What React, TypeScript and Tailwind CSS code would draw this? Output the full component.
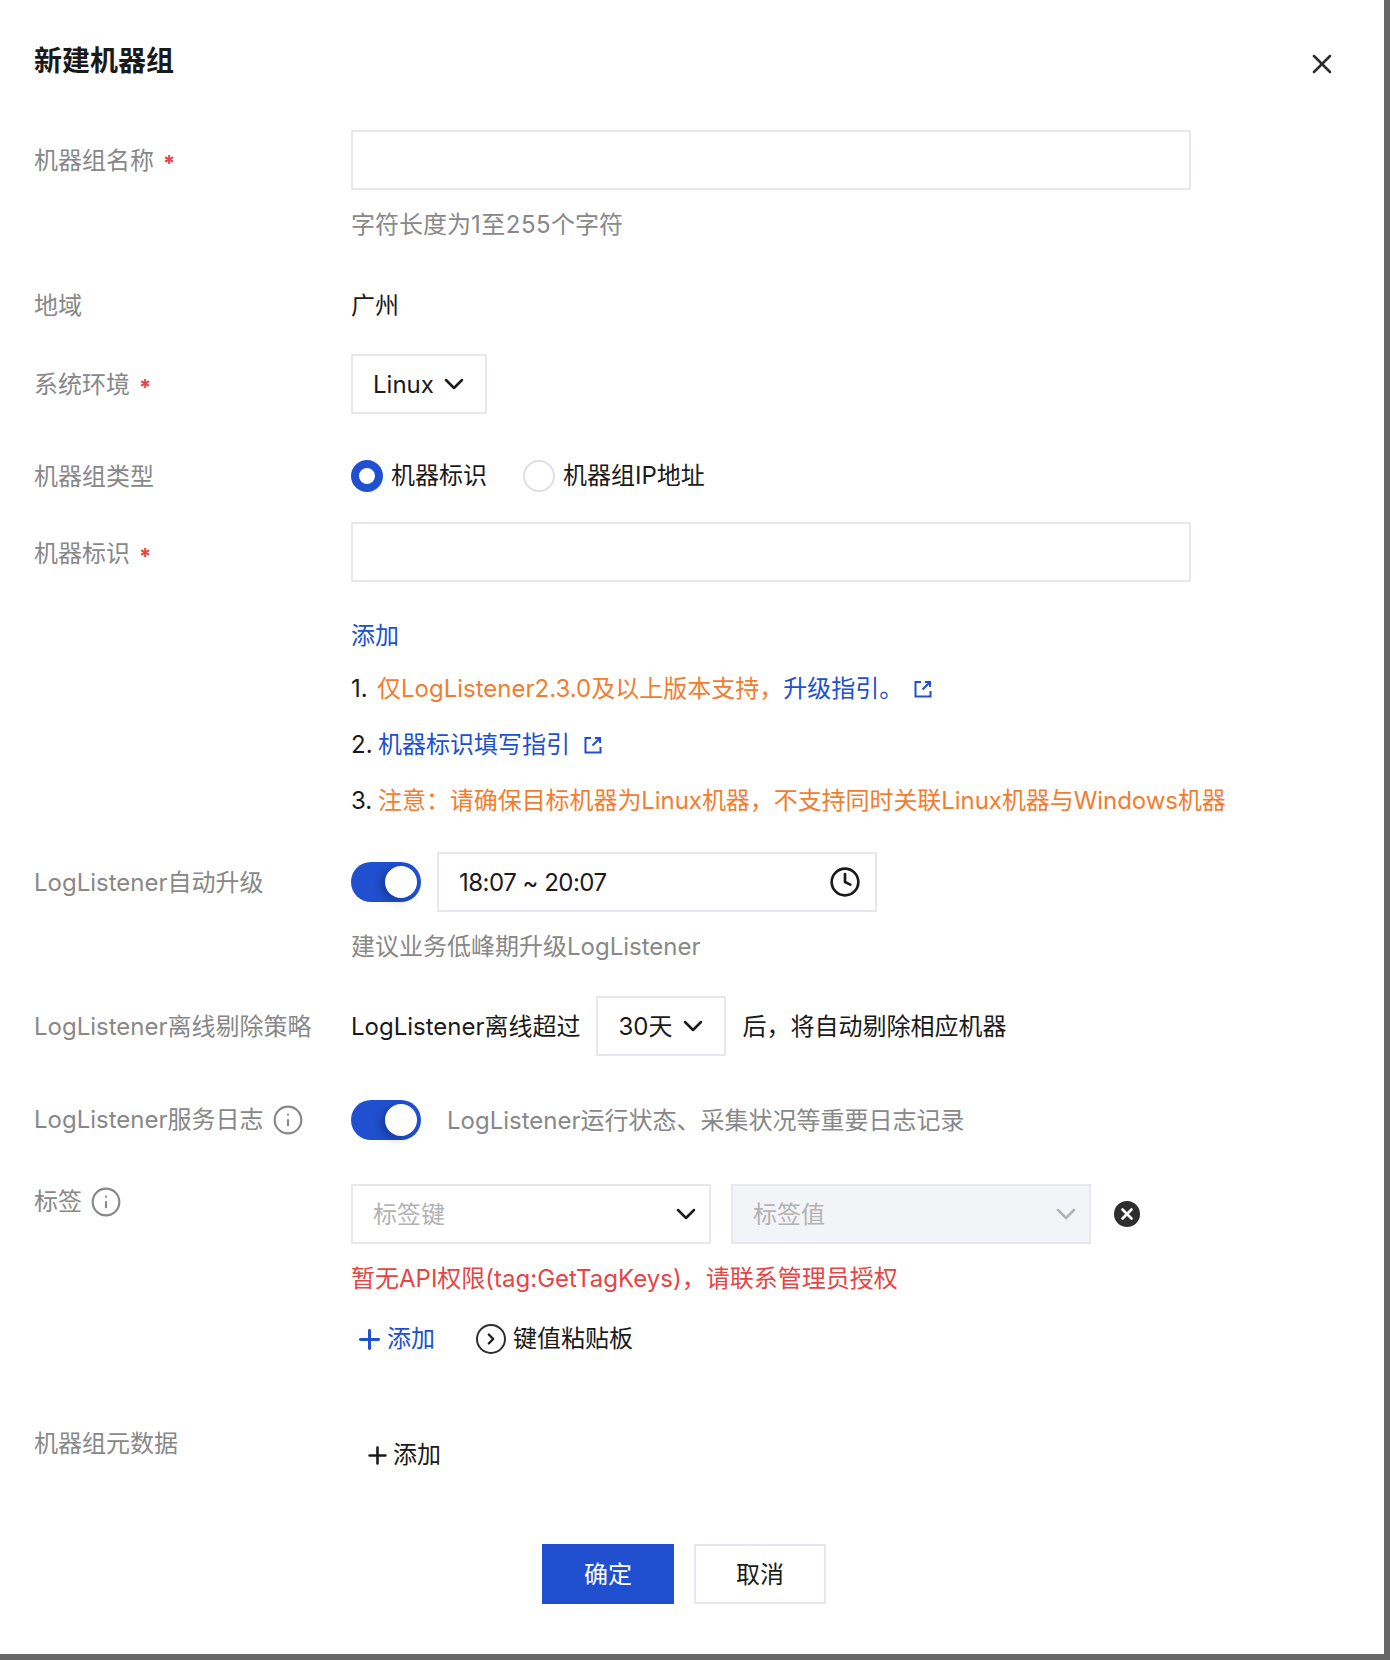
import { ChevronDown, Clock, Info, Plus, X } from "lucide-react";
import type { ReactNode } from "react";

const border = "border-2 border-[#e7e8ed]";

function Star() {
  return <span className="mt-1 ml-[9px] text-[22px] font-bold text-[#e54545]">*</span>;
}

function Row({ label, className, labelClass, children }: { label: ReactNode; className?: string; labelClass?: string; children: ReactNode }) {
  return (
    <div className={`flex ${className ?? ""}`}>
      <div className={`flex w-[317px] shrink-0 items-center text-[#888888] ${labelClass ?? ""}`}>{label}</div>
      <div className="min-w-0 flex-1">{children}</div>
    </div>
  );
}

function LinkIcon({ className }: { className?: string }) {
  return (
    <svg viewBox="0 0 18 18" fill="none" stroke="#2050d0" strokeWidth="2" className={`h-[18px] w-[18px] ${className ?? ""}`}>
      <path d="M7 2H1.5v14.5h15V11" />
      <path d="M11 2h5v5M16 2 8.5 9.5" />
    </svg>
  );
}

function Switch() {
  return (
    <div className="relative h-10 w-[70px] shrink-0 rounded-full bg-[#2050d0]">
      <div className="absolute top-1 right-1 h-8 w-8 rounded-full bg-white shadow-[-5px_3px_9px_rgba(0,0,0,0.25)]" />
    </div>
  );
}

function InfoIcon() {
  return <Info className="ml-2 h-8 w-8 text-[#888888]" strokeWidth={1.6} />;
}

function Chevron({ className }: { className?: string }) {
  return <ChevronDown className={`h-8 w-8 ${className ?? ""}`} strokeWidth={1.9} />;
}

export default function App() {
  return (
    <div className="h-[1660px] w-[1390px] bg-[#666666] font-['Inter','Noto_Sans_CJK_SC',sans-serif] text-[24px] leading-[36px] text-[#1a1a1a]">
      <div className="h-[1654px] w-[1384px] bg-white pl-[34px]">
        {/* header */}
        <div className="flex h-[130px] items-start justify-between pr-[46px]">
          <h1 className="mt-[41px] text-[28px] leading-[40px] font-bold">新建机器组</h1>
          <X className="mt-12 h-8 w-8 text-[#2e2e2e]" strokeWidth={1.9} />
        </div>

        <Row label={<>机器组名称<Star /></>} labelClass="h-[60px] pt-[2px]">
          <div className={`h-[60px] w-[840px] ${border}`} />
          <p className="mt-[17px] text-[#888888]">
            字符长度为<span className="tracking-[0.5px]">1至255</span>个字符
          </p>
        </Row>

        <Row label="地域" className="mt-[45px]">
          广州
        </Row>

        <Row label={<>系统环境<Star /></>} labelClass="pt-[2px]" className="mt-[30px] items-center">
          <div className={`flex h-[60px] w-[136px] items-center gap-1 pl-5 ${border}`}>
            <span className="pt-[2px]">Linux</span>
            <Chevron />
          </div>
        </Row>

        <Row label="机器组类型" labelClass="h-[36px] pt-[2px]" className="mt-11 items-center">
          <div className="flex items-center">
            <div className="h-8 w-8 rounded-full border-[8px] border-[#2050d0]" />
            <span className="ml-2">机器标识</span>
            <div className="ml-9 h-8 w-8 rounded-full border-2 border-[#dcdfe6]" />
            <span className="ml-2">机器组IP地址</span>
          </div>
        </Row>

        <Row label={<>机器标识<Star /></>} labelClass="h-[60px] pt-1" className="mt-7">
          <div className={`h-[60px] w-[840px] ${border}`} />
          <p className="mt-9 text-[#2050d0]">添加</p>
          <div className="mt-[17px] flex flex-col gap-5 whitespace-nowrap">
            <p className="flex items-center">
              <span className="w-[26px]">1.</span>
              <span className="text-[#f27d2e]">仅LogListener2.3.0及以上版本支持，</span>
              <span className="text-[#2050d0]">升级指引。</span>
              <LinkIcon className="ml-[11px]" />
            </p>
            <p className="flex items-center">
              <span className="w-[27px]">2.</span>
              <span className="text-[#2050d0]">机器标识填写指引</span>
              <LinkIcon className="ml-[14px]" />
            </p>
            <p className="flex items-center">
              <span className="w-[27px]">3.</span>
              <span className="tracking-[-0.06px] text-[#f27d2e]">注意：请确保目标机器为Linux机器，不支持同时关联Linux机器与Windows机器</span>
            </p>
          </div>
        </Row>

        <Row label="LogListener自动升级" labelClass="h-[60px] pt-[2px]" className="mt-[33px]">
          <div className="flex items-center">
            <Switch />
            <div className={`ml-4 flex h-[60px] w-[440px] items-center justify-between pr-[14px] pl-5 ${border}`}>
              <span className="pt-[2px] tracking-[-0.5px]">18:07 ~ 20:07</span>
              <Clock className="h-8 w-8" strokeWidth={2} />
            </div>
          </div>
          <p className="mt-[17px] text-[#888888]">建议业务低峰期升级LogListener</p>
        </Row>

        <Row label="LogListener离线剔除策略" labelClass="pt-[2px]" className="mt-[31px] items-center">
          <div className="flex items-center">
            <span className="pt-[2px]">LogListener离线超过</span>
            <div className={`mr-[17px] ml-[15px] flex h-[60px] w-[130px] items-center gap-1 pl-[21px] ${border}`}>
              <span className="pt-[2px]">30天</span>
              <Chevron />
            </div>
            <span className="pt-[2px]">后，将自动剔除相应机器</span>
          </div>
        </Row>

        <Row label={<>LogListener服务日志<InfoIcon /></>} className="mt-11 items-center">
          <div className="flex items-center">
            <Switch />
            <span className="ml-[26px] pt-[2px] text-[#888888]">LogListener运行状态、采集状况等重要日志记录</span>
          </div>
        </Row>

        <Row label={<>标签<InfoIcon /></>} className="mt-11" labelClass="h-[36px]">
          <div className="flex items-center">
            <div className={`flex h-[60px] w-[360px] items-center justify-between pr-[7px] pl-5 text-[#b3b3b3] ${border}`}>
              <span className="pt-[2px]">标签键</span>
              <Chevron className="text-[#1a1a1a]" />
            </div>
            <div className={`ml-5 flex h-[60px] w-[360px] items-center justify-between bg-[#f3f4f7] pr-[7px] pl-5 text-[#b3b3b3] ${border}`}>
              <span className="pt-[2px]">标签值</span>
              <Chevron />
            </div>
            <div className="ml-[23px] flex h-[26px] w-[26px] items-center justify-center rounded-full bg-[#2e2e2e]">
              <X className="h-[18px] w-[18px] text-white" strokeWidth={3.5} />
            </div>
          </div>
          <p className="mt-[17px] text-[#e54545]">暂无API权限(tag:GetTagKeys)，请联系管理员授权</p>
          <div className="mt-6 flex items-center">
            <Plus className="ml-[3px] h-[31px] w-[31px] text-[#2050d0]" strokeWidth={2.3} />
            <span className="ml-[2px] text-[#2050d0]">添加</span>
            <div className="ml-[41px] flex h-[30px] w-[30px] items-center justify-center rounded-full border-[2.5px] border-[#2e2e2e]">
              <ChevronDown className="h-[18px] w-[18px] -rotate-90" strokeWidth={3} />
            </div>
            <span className="ml-[7px]">键值粘贴板</span>
          </div>
        </Row>

        <Row label="机器组元数据" className="mt-[68px]" labelClass="h-[36px] pt-[2px]">
          <div className="mt-3 flex items-center pl-[13px]">
            <Plus className="h-[27px] w-[27px]" strokeWidth={2.3} />
            <span className="ml-[2px]">添加</span>
          </div>
        </Row>

        <div className="mt-[71px] flex gap-5 pl-[508px]">
          <button className="h-[60px] w-[132px] bg-[#2050d0] pt-[2px] text-white">确定</button>
          <button className={`h-[60px] w-[132px] pt-[2px] ${border}`}>取消</button>
        </div>
      </div>
    </div>
  );
}
